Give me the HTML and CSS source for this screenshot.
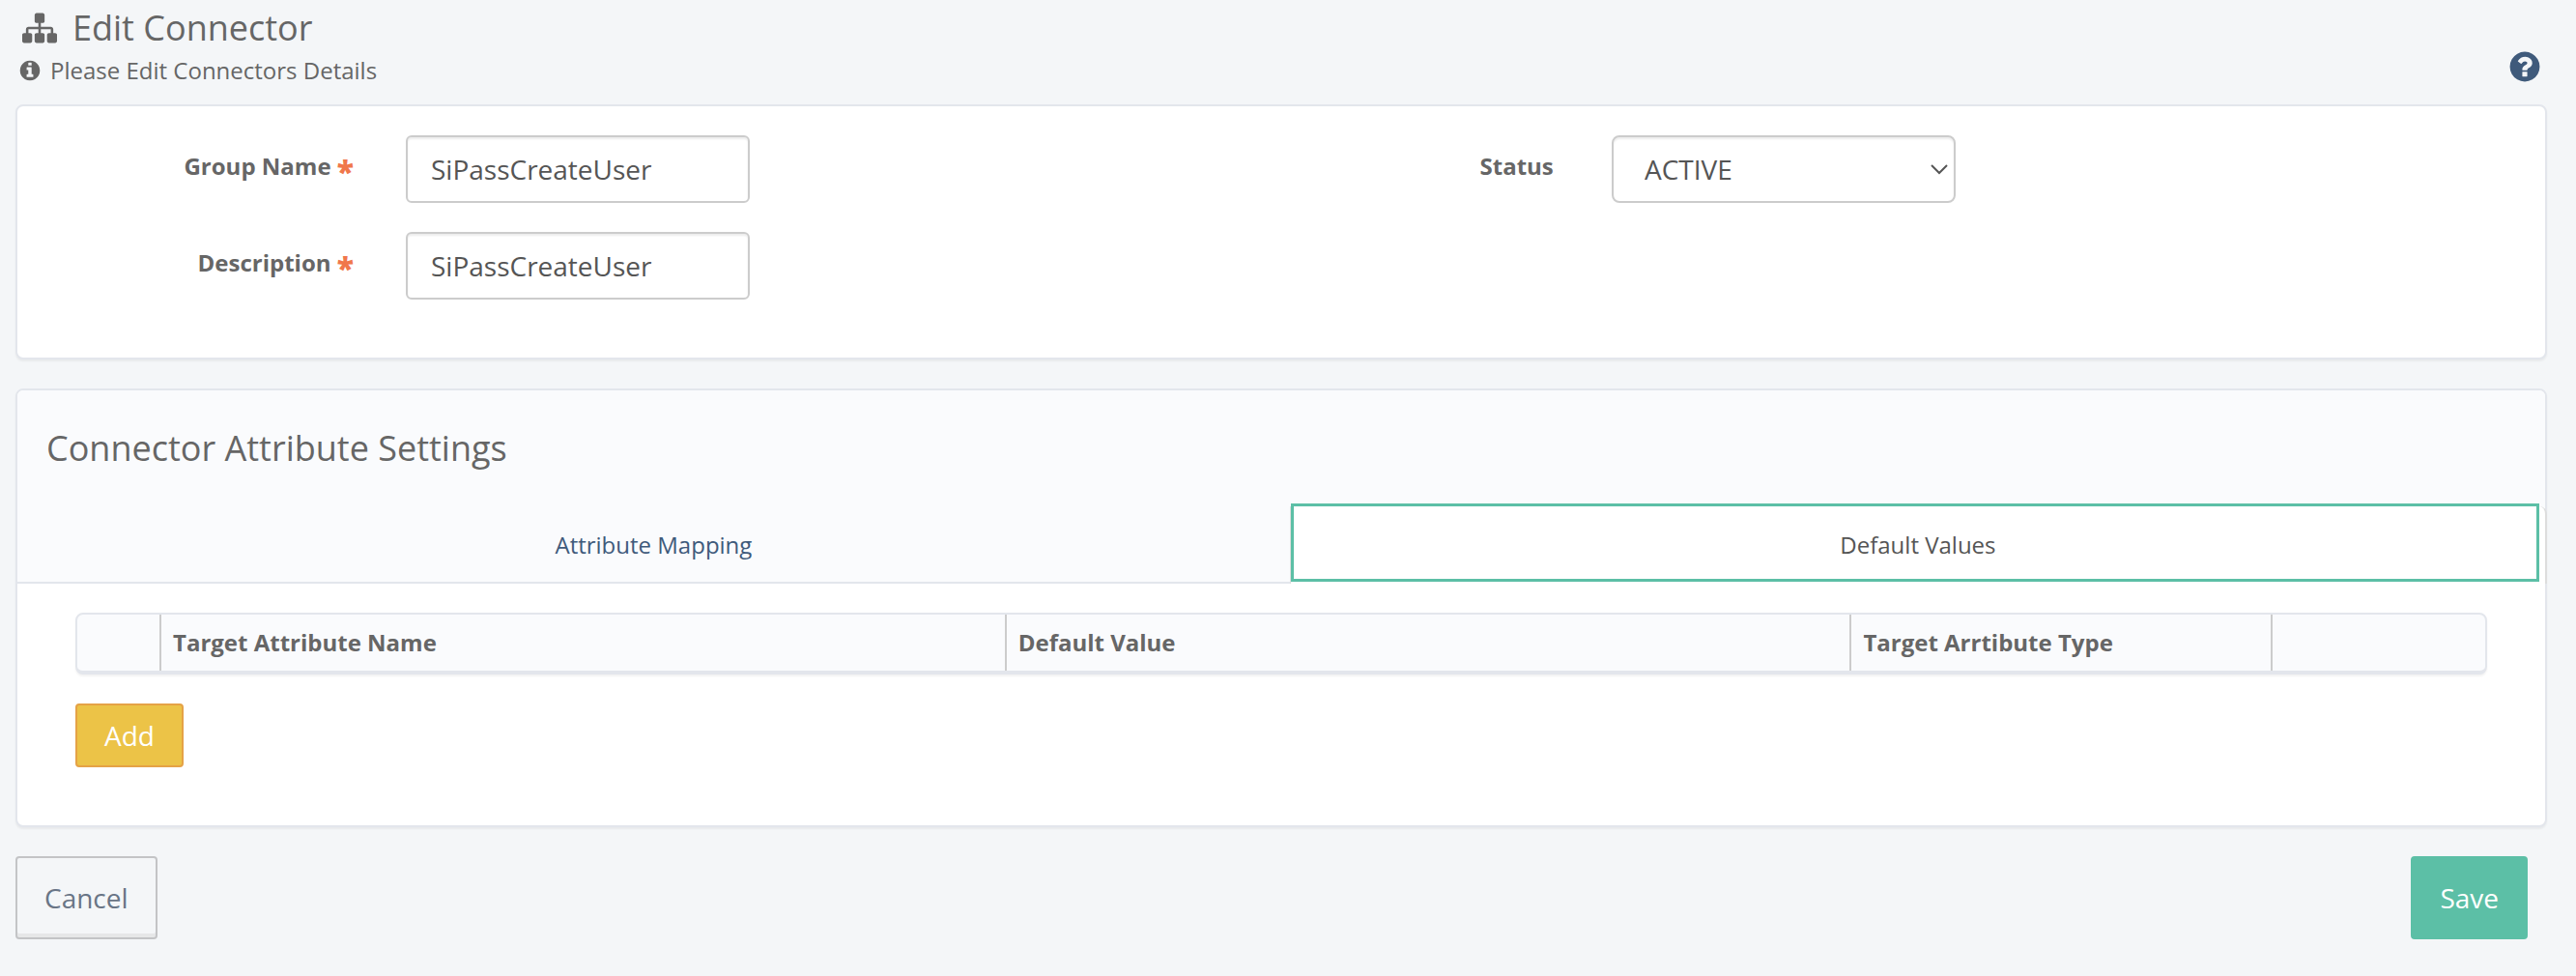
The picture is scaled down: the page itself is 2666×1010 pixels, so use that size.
FILE: index.html
```html
<!doctype html>
<html lang="en">
  <head>
    <meta charset="utf-8">
    <title>Edit Connector</title>
    <meta name="viewport" content="width=device-width, initial-scale=1">
    <link rel="stylesheet" href="styles.css">
  </head>
  <body>
    <header class="page-header">
      <div>
        <h1>
          <svg class="icon-title" viewBox="0 0 1792 1792" aria-hidden="true"><path d="M1792 1248v320q0 40-28 68t-68 28h-320q-40 0-68-28t-28-68v-320q0-40 28-68t68-28h96v-192h-512v192h96q40 0 68 28t28 68v320q0 40-28 68t-68 28h-320q-40 0-68-28t-28-68v-320q0-40 28-68t68-28h96v-192h-512v192h96q40 0 68 28t28 68v320q0 40-28 68t-68 28h-320q-40 0-68-28t-28-68v-320q0-40 28-68t68-28h96v-192q0-52 38-90t90-38h512v-192h-96q-40 0-68-28t-28-68v-320q0-40 28-68t68-28h320q40 0 68 28t28 68v320q0 40-28 68t-68 28h-96v192h512q52 0 90 38t38 90v192h96q40 0 68 28t28 68z"/></svg>
          Edit Connector
        </h1>
        <p class="subtitle">
          <svg class="icon-info" viewBox="0 0 1792 1792" aria-hidden="true"><path d="M1152 1376v-160q0-14-9-23t-23-9h-96v-512q0-14-9-23t-23-9h-320q-14 0-23 9t-9 23v160q0 14 9 23t23 9h96v320h-96q-14 0-23 9t-9 23v160q0 14 9 23t23 9h448q14 0 23-9t9-23zm-128-896v-160q0-14-9-23t-23-9h-192q-14 0-23 9t-9 23v160q0 14 9 23t23 9h192q14 0 23-9t9-23zm640 416q0 209-103 385.5t-279.5 279.5-385.5 103-385.5-103-279.5-279.5-103-385.5 103-385.5 279.5-279.5 385.5-103 385.5 103 279.5 279.5 103 385.5z"/></svg>
          Please Edit Connectors Details
        </p>
      </div>
      <a class="help" href="#help" aria-label="Help">
        <svg class="icon-help" viewBox="0 0 1792 1792" aria-hidden="true"><path d="M1024 1376v-192q0-14-9-23t-23-9h-192q-14 0-23 9t-9 23v192q0 14 9 23t23 9h192q14 0 23-9t9-23zm256-672q0-88-55.5-163t-138.5-116-170-41q-243 0-371 213-15 24 8 42l132 100q7 6 19 6 16 0 25-12 53-68 86-92 34-24 86-24 48 0 85.5 26t37.5 59q0 38-20 61t-68 45q-63 28-115.5 86.5t-52.5 125.5v36q0 14 9 23t23 9h192q14 0 23-9t9-23q0-19 21.5-49.5t54.5-49.5q32-18 49-28.5t46-35 44.5-48 28-60.5 12.5-81zm384 192q0 209-103 385.5t-279.5 279.5-385.5 103-385.5-103-279.5-279.5-103-385.5 103-385.5 279.5-279.5 385.5-103 385.5 103 279.5 279.5 103 385.5z"/></svg>
      </a>
    </header>

    <form>
      <section class="panel details">
        <div class="field">
          <label for="groupName">Group Name <span class="required">*</span></label>
          <input type="text" id="groupName" value="SiPassCreateUser" required>
        </div>
        <div class="field">
          <label for="status">Status&nbsp;</label>
          <div class="select">
            <select id="status">
              <option>ACTIVE</option>
              <option>INACTIVE</option>
            </select>
            <svg viewBox="0 0 18 12" aria-hidden="true"><path d="M1 1l8 8 8-8"/></svg>
          </div>
        </div>
        <div class="field">
          <label for="description">Description <span class="required">*</span></label>
          <input type="text" id="description" value="SiPassCreateUser" required>
        </div>
      </section>

      <section class="panel settings">
        <div class="panel-heading">
          <h2>Connector Attribute Settings</h2>
          <ul class="tabs">
            <li><a href="#mapping">Attribute Mapping</a></li>
            <li class="active"><a href="#defaults">Default Values</a></li>
          </ul>
        </div>
        <div class="panel-body" id="defaults">
          <table>
            <thead>
              <tr>
                <th class="col-select"></th>
                <th class="col-name">Target Attribute Name</th>
                <th class="col-value">Default Value</th>
                <th class="col-type">Target Arrtibute Type</th>
                <th></th>
              </tr>
            </thead>
          </table>
          <button type="button" class="btn btn-add">Add</button>
        </div>
      </section>

      <div class="actions">
        <button type="button" class="btn btn-cancel">Cancel</button>
        <button type="submit" class="btn btn-save">Save</button>
      </div>
    </form>
  </body>
</html>
```
FILE: styles.css
```css
* {
  box-sizing: border-box;
}
body {
  margin: 0;
  padding: 1px 30px 38px 16px;
  background: #f4f6f8;
  color: #666;
  font-family: "Open Sans", sans-serif;
  font-size: 24px;
  line-height: 32px;
}
h1, h2, p {
  margin: 0;
  font-weight: normal;
}
svg {
  display: block;
  flex: none;
  fill: currentColor;
}
a {
  color: #3f5a7b;
  text-decoration: none;
}

/* header */
.page-header {
  display: flex;
  justify-content: space-between;
  align-items: flex-end;
  margin-bottom: 19px;
}
h1 {
  display: flex;
  align-items: center;
  gap: 16px;
  padding-left: 7px;
  font-size: 36px;
  line-height: 56px;
}
.subtitle {
  display: flex;
  align-items: center;
  gap: 9px;
  padding-left: 3px;
}
.icon-title, .icon-help {
  width: 36px;
  height: 36px;
}
.icon-info {
  width: 24px;
  height: 24px;
}
.help {
  margin: 0 5px 2px 0;
}

/* panels */
.panel {
  margin-bottom: 30px;
  background: #fff;
  border: 2px solid #e3e6ec;
  border-radius: 8px;
  box-shadow: 0 2px 2px rgba(0, 0, 0, 0.05);
}
.details {
  display: grid;
  grid-template-columns: 1fr 1fr;
  row-gap: 30px;
  padding: 30px 60px 60px;
}
.field {
  display: flex;
  gap: 54px;
}
.field label {
  width: 288px;
  padding-top: 16px;
  text-align: right;
  font-weight: bold;
}
.required {
  color: #f0774b;
  font-size: 32px;
  font-weight: 800;
  line-height: 0;
  vertical-align: -8px;
}
input, select {
  width: 356px;
  height: 70px;
  padding: 0 24px;
  background: #fff;
  border: 2px solid #ccc;
  border-radius: 6px;
  box-shadow: inset 0 2px 2px rgba(0, 0, 0, 0.075);
  color: #555;
  font-family: inherit;
  font-size: 28px;
}
.select {
  position: relative;
}
select {
  appearance: none;
  padding: 0 32px;
  border-radius: 8px;
}
.select svg {
  position: absolute;
  top: 30px;
  right: 8px;
  width: 18px;
  height: 12px;
  fill: none;
  stroke: #555;
  stroke-width: 2;
  pointer-events: none;
}

/* attribute settings */
.panel-heading {
  background: #fafbfd;
  border-radius: 6px 6px 0 0;
}
h2 {
  padding: 32px 30px;
  font-size: 36px;
  line-height: 56px;
}
.tabs {
  display: flex;
  margin: 0 -2px 0 0;
  padding: 0;
  list-style: none;
}
.tabs li {
  flex: 1;
  height: 80px;
  border-bottom: 2px solid #e3e6ec;
  text-align: center;
}
.tabs li:first-child {
  flex: 0 0 50.3%;
}
.tabs a {
  display: block;
  line-height: 80px;
}
.tabs .active {
  padding: 0 9px 5px 3px;
  background: #fff;
  border: solid #ddd;
  border-width: 0 2px 0 1px;
  border-radius: 0 8px 0 0;
}
.tabs .active a {
  height: 75px;
  padding-left: 6px;
  color: #555;
  outline: 3px solid #5cbfa6;
}
.panel-body {
  padding: 30px 60px 60px;
}
table {
  width: 100%;
  margin-bottom: 30px;
  table-layout: fixed;
  border: 2px solid #e3e6ec;
  border-bottom-width: 4px;
  border-radius: 8px;
  border-spacing: 0;
  background: #fafbfd;
  box-shadow: 0 2px 2px rgba(0, 0, 0, 0.05);
}
th {
  height: 58px;
  padding: 0 12px;
  border-left: 2px solid #ccc;
  text-align: left;
}
th:first-child {
  border-left: 0;
}
.col-select {
  width: 85px;
}
.col-name, .col-value {
  width: 35.1%;
}
.col-type {
  width: 17.5%;
}

/* buttons */
.btn {
  display: block;
  padding: 0 28px;
  border: 2px solid;
  border-radius: 4px;
  font-family: inherit;
  font-size: 28px;
  cursor: pointer;
}
.btn-add {
  height: 66px;
  background: #ecc347;
  border-color: #e5a246;
  color: #fff;
}
.actions {
  display: flex;
  justify-content: space-between;
  padding-right: 20px;
}
.btn-cancel, .btn-save {
  height: 86px;
}
.btn-cancel {
  background: transparent;
  border-color: #c3c4c6;
  box-shadow: inset 0 -4px 0 #e6e7e8;
  color: #697586;
}
.btn-save {
  background: #5cbfa6;
  border-color: #5cbfa6;
  color: #fff;
}
```
